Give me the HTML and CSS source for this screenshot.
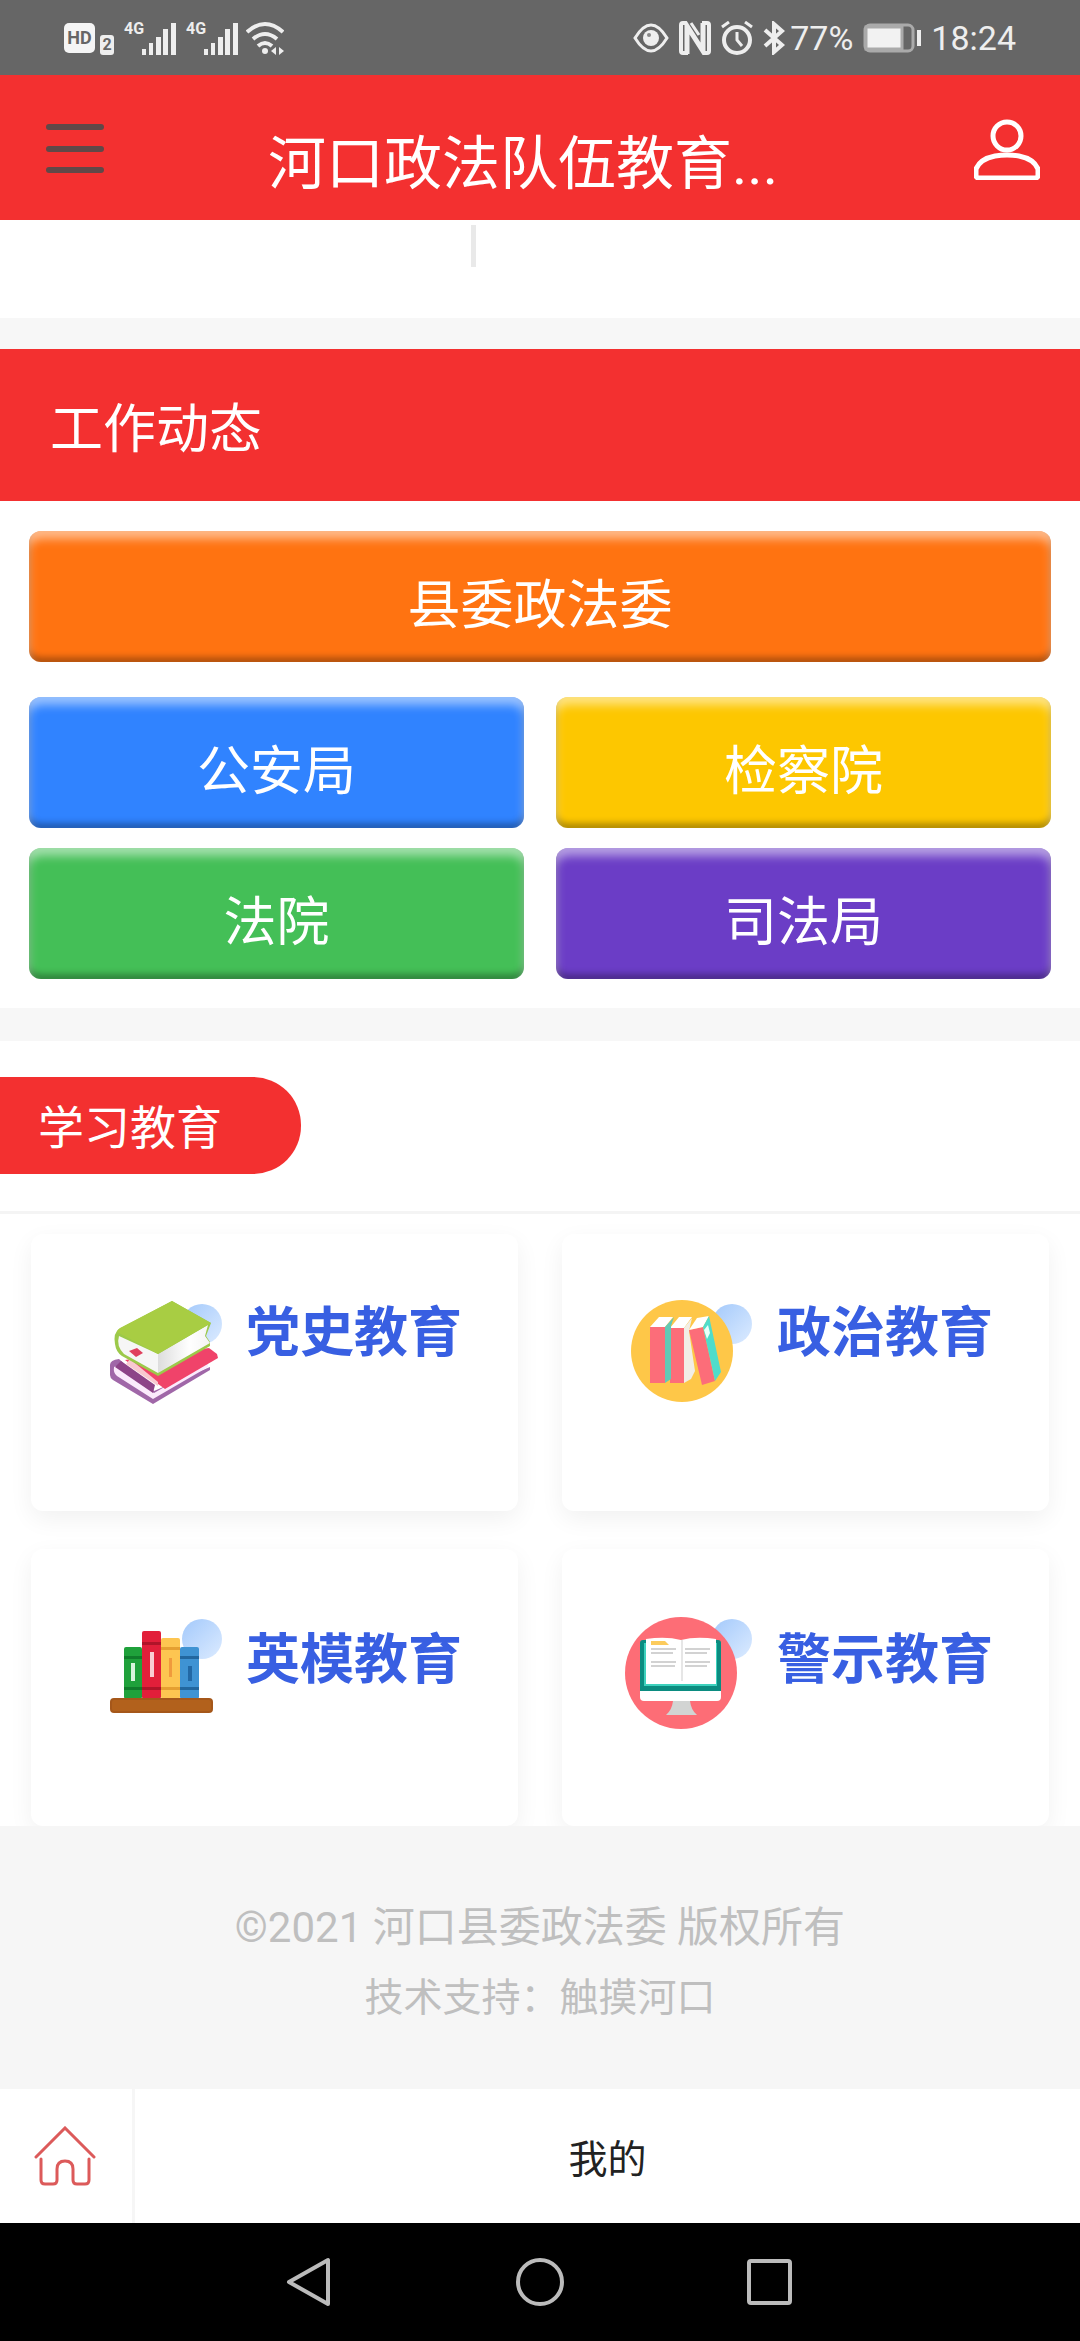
FILE: index.html
```html
<!DOCTYPE html>
<html lang="zh-CN">
<head>
  <meta charset="UTF-8" />
  <meta name="viewport" content="width=device-width, initial-scale=1.0" />
  <title>河口政法队伍教育</title>
  <link rel="stylesheet" href="styles.css">
</head>
<body>
  <div class="status-bar">
    <div class="status-group">
      <span class="badge-hd">HD</span>
      <span class="badge-sim">2</span>
      <span class="net">4G</span>
      <svg class="signal" width="34" height="34" viewBox="0 0 34 34" fill="#eee"><path d="M0 28h4v6H0zM7 22h4v12H7zM14 16h5v18h-5zM21 8h5v26h-5zM29 2h5v32h-5z"/></svg>
      <span class="net">4G</span>
      <svg class="signal" width="34" height="34" viewBox="0 0 34 34" fill="#eee"><path d="M0 28h4v6H0zM7 22h4v12H7zM14 16h5v18h-5zM21 8h5v26h-5zM29 2h5v32h-5z"/></svg>
      <svg class="wifi" width="38" height="34" viewBox="0 0 38 34" fill="none" stroke="#eee" stroke-width="4"><path d="M1 11Q19-5 37 11M7 18q12-10 24 0M12 25q7-6 14 0"/><circle cx="19" cy="30" r="3" fill="#eee" stroke="none"/><path d="M25 30l5-4v8zM38 30l-5-4v8z" fill="#eee" stroke="none"/></svg>
    </div>
    <div class="status-group status-right">
      <svg width="36" height="34" viewBox="0 0 36 34" fill="none" stroke="#eee" stroke-width="3"><path d="M2 17Q18-9 34 17Q18 43 2 17z"/><circle cx="18" cy="17" r="8" fill="#eee" stroke="none"/><circle cx="16" cy="14" r="2" fill="#888" stroke="none"/></svg>
      <svg width="32" height="34" viewBox="0 0 32 34" fill="none" stroke="#eee"><path d="M9 32H4q-2 0-2-2V4q0-2 2-2h3M23 2h5q2 0 2 2v26q0 2-2 2h-3" stroke-width="4"/><path d="M8 33V5l16 25V2" stroke-width="5"/><path d="M12 2l8 12" stroke-width="3"/></svg>
      <svg width="32" height="34" viewBox="0 0 32 34" fill="none" stroke="#eee" stroke-width="4"><circle cx="16" cy="19" r="13"/><path d="M16 11v8l5 6M1 6l7-5M31 6l-7-5" stroke-width="3"/></svg>
      <svg class="bluetooth" width="22" height="34" viewBox="0 0 22 34" fill="none" stroke="#eee" stroke-width="4"><path d="M2 9l17 15-8 7V3l8 7L2 25"/></svg>
      <span class="status-text">77%</span>
      <svg width="58" height="30" viewBox="0 0 58 30" fill="none" stroke="#aaa" stroke-width="3"><rect x="2" y="2" width="48" height="26" rx="5"/><rect x="3" y="4" width="36" height="22" fill="#f2f2f2"/><path d="M56 7v16" stroke="#eee" stroke-width="4"/></svg>
      <span class="status-text">18:24</span>
    </div>
  </div>

  <header class="header">
    <button class="icon-btn" aria-label="菜单">
      <svg width="58" height="50" viewBox="0 0 58 50" stroke="#604848" stroke-width="6" stroke-linecap="round"><path d="M3 4h52M3 26h52M3 47h52"/></svg>
    </button>
    <h1 class="title">河口政法队伍教育...</h1>
    <button class="icon-btn" aria-label="个人中心">
      <svg width="66" height="64" viewBox="0 0 66 64" fill="none" stroke="#fff" stroke-width="5"><circle cx="33" cy="20" r="14"/><path d="M5 62q-3 0-3-3v-6q4-10 19-13 12-2 24 0 15 3 19 13v6q0 3-3 3z"/></svg>
    </button>
  </header>

  <div class="pager"><span class="pager-line"></span></div>

  <h2 class="section-title">工作动态</h2>
  <div class="depts">
    <button class="dept dept-wide orange">县委政法委</button>
    <button class="dept blue">公安局</button>
    <button class="dept yellow">检察院</button>
    <button class="dept green">法院</button>
    <button class="dept purple">司法局</button>
  </div>

  <div class="study-head">
    <h2 class="tag">学习教育</h2>
  </div>
  <div class="cards">
    <a class="card" href="#">
      <svg width="130" height="120" viewBox="0 0 130 120">
        <defs>
          <linearGradient id="blob" x1="0" y1="0" x2="1" y2="1">
            <stop offset="0" stop-color="#a3c9fb"/><stop offset="1" stop-color="#dcebff"/>
          </linearGradient>
          <linearGradient id="pages" x1="0" y1="0" x2="1" y2="0">
            <stop offset="0" stop-color="#ddd"/><stop offset=".6" stop-color="#fff"/><stop offset="1" stop-color="#f4f4f4"/>
          </linearGradient>
        </defs>
        <circle cx="108" cy="28" r="20" fill="url(#blob)"/>
        <path d="M25 63q-9 1-9 6v10q0 3 3 5l40 24 57-34v-3L60 95z" fill="#a067a8"/>
        <path d="M20 71q-1 6 3 9l36 23 55-32v-5L60 97 27 72q-4-3-7-1z" fill="#fbeafc"/>
        <path d="M27 65l34 24-2 8-38-26z" fill="#8d4388"/>
        <path d="M31 64l40 29 53-31-1-4-8-6z" fill="#f0436a"/>
        <path d="M32 68l32 22v-4L36 63z" fill="#f9c8d0"/>
        <path d="M78 5L25 33q-6 4-4 15 1 8 7 12l36 20 52-30v-4l-4-6 5-13z" fill="#9cc94a"/>
        <path d="M25 40q-3 10 5 18l34 19V58z" fill="#f6f6f6"/>
        <path d="M64 58l50-29-3 11 5 7-52 30z" fill="url(#pages)"/>
        <path d="M78 5l39 22-53 31L23 36q0-2 3-4z" fill="#a8cd43"/>
        <path d="M35 55l8-3 6 5-7 4z" fill="#e0405e"/>
      </svg>
      <span class="card-text">党史教育</span>
    </a>
    <a class="card" href="#">
      <svg width="130" height="120" viewBox="0 0 130 120">
        <circle cx="107" cy="28" r="20" fill="url(#blob)"/>
        <circle cx="57" cy="55" r="51" fill="#fec748"/>
        <path d="M25 31h15v56H25zM45 32h14v55H45z" fill="#fc6d79"/>
        <path d="M25 31l9-10h14l-8 10zM45 32l9-11h13l-8 11z" fill="#fff"/>
        <path d="M40 31l9-10-3 9v53l-6 4z" fill="#62c9b6"/>
        <path d="M59 32l8-10-3 13 6 40-4 8-7 4z" fill="#f1eee6"/>
        <path d="M64 34l14-3 12 54-13 4z" fill="#fc6d79"/>
        <path d="M64 34l8-12 12-2-6 11z" fill="#fff"/>
        <path d="M78 31l6-11 12 56-6 9z" fill="#4fdccb"/>
        <path d="M79 34l4-5 2 8-3 6z" fill="#e8fffa"/>
      </svg>
      <span class="card-text">政治教育</span>
    </a>
    <a class="card card-low" href="#">
      <svg width="130" height="120" viewBox="0 0 130 120">
        <circle cx="108" cy="28" r="20" fill="url(#blob)"/>
        <rect x="30" y="36" width="18" height="52" rx="2" fill="#1fa13b"/>
        <rect x="48" y="20" width="19" height="68" rx="2" fill="#e21f3a"/>
        <rect x="67" y="27" width="19" height="61" rx="2" fill="#fdc551"/>
        <rect x="86" y="36" width="19" height="52" rx="2" fill="#3f93d3"/>
        <path d="M30 45h18v3H30zM30 76h18v3H30z" fill="#107c2b"/>
        <path d="M48 31h19v3H48zM48 76h19v3H48z" fill="#b01429"/>
        <path d="M67 36h19v3H67zM67 76h19v3H67z" fill="#e59f31"/>
        <path d="M86 45h19v3H86zM86 76h19v3H86z" fill="#22679f"/>
        <path d="M37 52h4v18h-4z" fill="#d9f4dd"/>
        <path d="M56 41h4v25h-4z" fill="#f9cdd3"/>
        <path d="M75 47h3v19h-3z" fill="#f09a3c"/>
        <path d="M94 55h4v15h-4z" fill="#2268a5"/>
        <rect x="17" y="88" width="101" height="13" rx="3" fill="#b2611c" stroke="#a5571a" stroke-width="2"/>
      </svg>
      <span class="card-text">英模教育</span>
    </a>
    <a class="card card-low" href="#">
      <svg width="130" height="120" viewBox="0 0 130 120">
        <circle cx="107" cy="28" r="20" fill="url(#blob)"/>
        <circle cx="56" cy="62" r="56" fill="#fd6d76"/>
        <path d="M15 32q0-3 3-3h75q3 0 3 3v48H15z" fill="#0b8c80"/>
        <path d="M19 32h73v43H19z" fill="#3dd1bd"/>
        <path d="M21 28q20-3 35 1 15-4 35-1v45H21z" fill="#fff"/>
        <path d="M57 29v41" stroke="#e6e6e6" stroke-width="2"/>
        <path d="M26 30h14l4 4H26z" fill="#fccb5c"/>
        <path d="M26 38h25M26 42h22M26 51h25M26 55h24M60 38h25M60 42h22M60 51h25M60 55h22" stroke="#d2d2d2" stroke-width="2"/>
        <path d="M15 80h81v6q0 4-4 4H19q-4 0-4-4z" fill="#fff"/>
        <path d="M48 90h17q1 9 7 14H41q6-5 7-14z" fill="#d2d4d3"/>
      </svg>
      <span class="card-text">警示教育</span>
    </a>
  </div>

  <footer class="footer">
    <p class="copyright">©2021 河口县委政法委 版权所有</p>
    <p class="support">技术支持：触摸河口</p>
  </footer>

  <nav class="tab-bar">
    <a class="tab-home" href="#" aria-label="首页">
      <svg width="62" height="60" viewBox="0 0 62 60" fill="none" stroke="#dc5a5a" stroke-width="3" stroke-linecap="round"><path d="M2 31L31 2l29 29M7 33v21q0 4 4 4h8q4 0 4-4V43q0-8 8-8t8 8v11q0 4 4 4h8q4 0 4-4V33"/></svg>
    </a>
    <a class="tab-mine" href="#">我的</a>
  </nav>

  <div class="sys-nav">
    <button class="icon-btn" aria-label="返回">
      <svg width="50" height="50" viewBox="0 0 50 50" fill="none" stroke="#bbb" stroke-width="4" stroke-linejoin="round"><path d="M4 25L43 3v44z"/></svg>
    </button>
    <button class="icon-btn" aria-label="主屏幕">
      <svg width="50" height="50" viewBox="0 0 50 50" fill="none" stroke="#bbb" stroke-width="4"><circle cx="25" cy="25" r="22"/></svg>
    </button>
    <button class="icon-btn" aria-label="最近任务">
      <svg width="50" height="50" viewBox="0 0 50 50" fill="none" stroke="#bbb" stroke-width="4"><rect x="4" y="4" width="41" height="42" rx="2"/></svg>
    </button>
  </div>
</body>
</html>
```
FILE: styles.css
```css
* {
  box-sizing: border-box;
}
body {
  font-family: Roboto, "Noto Sans CJK SC", sans-serif;
  margin: 0;
  background-color: #f7f7f7;
}
h1, h2, p {
  margin: 0;
  font-weight: normal;
}
a {
  text-decoration: none;
}
svg {
  display: block;
  flex-shrink: 0;
}
button {
  font-family: inherit;
  border: none;
  padding: 0;
  cursor: pointer;
}
.icon-btn {
  background: none;
}

/* phone status bar */
.status-bar {
  display: flex;
  justify-content: space-between;
  align-items: center;
  height: 75px;
  padding: 0 64px;
  background: #666;
  color: #eee;
}
.status-group {
  display: flex;
  align-items: center;
}
.status-right {
  gap: 10px;
}
.badge-hd {
  width: 31px;
  line-height: 30px;
  border-radius: 5px;
  background: #f5f5f5;
  color: #666;
  font-size: 18px;
  font-weight: bold;
  text-align: center;
}
.badge-sim {
  align-self: flex-end;
  width: 14px;
  margin-left: 5px;
  line-height: 20px;
  border-radius: 3px;
  background: #eee;
  color: #666;
  font-size: 16px;
  font-weight: bold;
  text-align: center;
}
.net {
  align-self: flex-start;
  width: 18px;
  margin-left: 10px;
  font-size: 16px;
  font-weight: bold;
  line-height: 16px;
}
.wifi {
  margin-left: 8px;
}
.bluetooth {
  margin-right: -5px;
}
.status-text {
  font-size: 34px;
  line-height: 40px;
}

/* top header */
.header {
  display: flex;
  align-items: center;
  height: 145px;
  padding: 0 40px 0 46px;
  background: #f33030;
}
.title {
  flex: 1;
  padding: 32px 32px 0 0;
  color: #fff;
  font-size: 58px;
  line-height: 64px;
  text-align: center;
  white-space: nowrap;
}
.pager {
  height: 98px;
  margin-bottom: 31px;
  padding: 5px 0 0 471px;
  background: #fff;
}
.pager-line {
  display: block;
  width: 5px;
  height: 42px;
  background: #e9e9e9;
}

/* departments */
.section-title {
  padding: 49px 50px 39px;
  background: #f33030;
  color: #fff;
  font-size: 53px;
  line-height: 64px;
}
.depts {
  display: grid;
  grid-template-columns: 1fr 1fr;
  gap: 20px 32px;
  margin-bottom: 33px;
  padding: 30px 29px 29px;
  background: #fff;
}
.dept {
  height: 131px;
  padding-top: 8px;
  border-radius: 12px;
  box-shadow: inset 0 8px 10px rgba(255, 255, 255, 0.5), inset 0 -5px 6px rgba(0, 0, 0, 0.3);
  color: #fff;
  font-size: 53px;
}
.dept-wide {
  grid-column: 1 / 3;
  margin-bottom: 15px;
}
.orange { background: #ff7311; }
.blue { background: #3083ff; }
.yellow { background: #fdc700; }
.green { background: #44bf57; }
.purple { background: #6b3dc6; }

/* study */
.study-head {
  padding: 36px 0 37px;
  border-bottom: 3px solid #f4f4f4;
  background: #fff;
}
.tag {
  width: 301px;
  padding: 5px 0 0 38px;
  border-radius: 0 48px 48px 0;
  background: #f33030;
  color: #fff;
  font-size: 46px;
  line-height: 92px;
}
.cards {
  display: grid;
  grid-template-columns: 1fr 1fr;
  gap: 38px 44px;
  padding: 20px 31px 0;
  background: #fff;
  overflow: hidden;
}
.card {
  display: flex;
  align-items: flex-start;
  gap: 22px;
  height: 277px;
  padding: 62px 0 0 63px;
  border-radius: 12px;
  background: #fff;
  box-shadow: 0 8px 24px rgba(0, 0, 0, 0.06);
}
.card-text {
  color: #385fe2;
  font-size: 54px;
  font-weight: bold;
  line-height: 76px;
  white-space: nowrap;
}
.card-low .card-text {
  line-height: 100px;
}

/* footer */
.footer {
  padding: 66px 0 55px;
  background: #f6f6f6;
  color: #bfbfbf;
  text-align: center;
}
.copyright {
  font-size: 42px;
  line-height: 71px;
}
.support {
  font-size: 39px;
  line-height: 71px;
}
.tab-bar {
  display: flex;
  height: 134px;
  background: #fff;
}
.tab-home {
  display: flex;
  align-items: center;
  padding: 0 36px 0 34px;
  border-right: 3px solid #f6f6f6;
}
.tab-mine {
  flex: 1;
  padding-top: 8px;
  color: #222;
  font-size: 39px;
  line-height: 126px;
  text-align: center;
}
.sys-nav {
  display: flex;
  justify-content: center;
  gap: 180px;
  padding: 34px 0;
  background: #000;
}
```
